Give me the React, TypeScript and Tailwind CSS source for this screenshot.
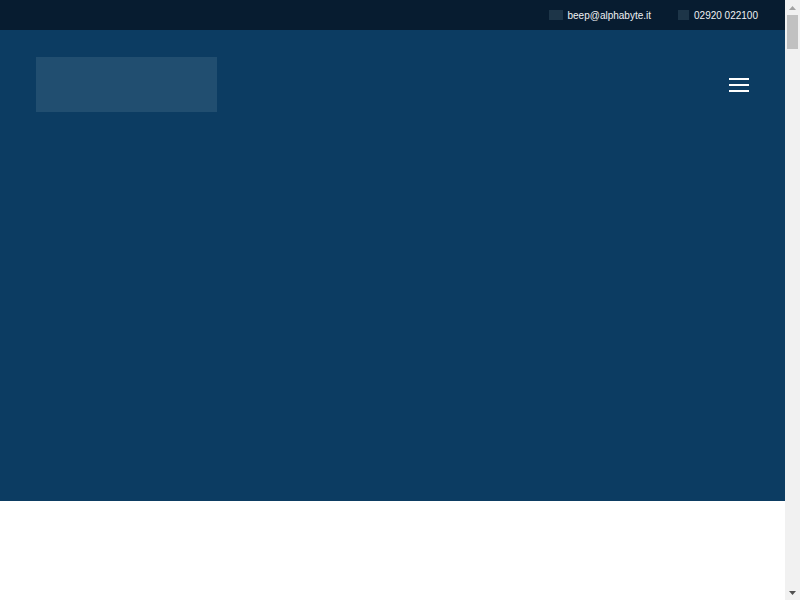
export default function App() {
  return (
    <div className="min-h-[9000px] bg-white pr-[15px] font-['Liberation_Sans',Arial,sans-serif]">
      <div className="flex h-[30px] items-center justify-end bg-[#071c30] pr-[27px] text-[10px] text-[#eef1f4]">
        <div className="flex items-center">
          <span className="mr-[4px] inline-block h-[10px] w-[14px] bg-[#1d3548]" />
          <span>beep@alphabyte.it</span>
        </div>
        <div className="ml-[27px] flex items-center">
          <span className="mr-[5px] inline-block h-[10px] w-[11px] bg-[#1d3548]" />
          <span>02920 022100</span>
        </div>
      </div>
      <div className="h-[471px] bg-[#0c3c62]">
        <div className="flex items-start justify-between pl-[36px] pr-[36px] pt-[27px]">
          <div className="h-[55px] w-[181px] bg-[#214e70]" />
          <button className="mt-[21px] flex w-[20px] flex-col gap-[4px]">
            <span className="h-[2px] w-full bg-white" />
            <span className="h-[2px] w-full bg-white" />
            <span className="h-[2px] w-full bg-white" />
          </button>
        </div>
      </div>

      {/* fake browser scrollbar */}
      <div className="fixed right-0 top-0 flex h-[600px] w-[15px] flex-col items-center bg-[#f1f1f1]">
        <div className="flex h-[15px] w-full items-center justify-center">
          <svg width="7" height="4" viewBox="0 0 7 4">
            <path d="M0 4 L3.5 0 L7 4 Z" fill="#a3a3a3" />
          </svg>
        </div>
        <div className="h-[34px] w-[11px] bg-[#c1c1c1]" />
        <div className="flex-1" />
        <div className="flex h-[15px] w-full items-center justify-center">
          <svg width="7" height="4" viewBox="0 0 7 4">
            <path d="M0 0 L7 0 L3.5 4 Z" fill="#505050" />
          </svg>
        </div>
      </div>
    </div>
  )
}
